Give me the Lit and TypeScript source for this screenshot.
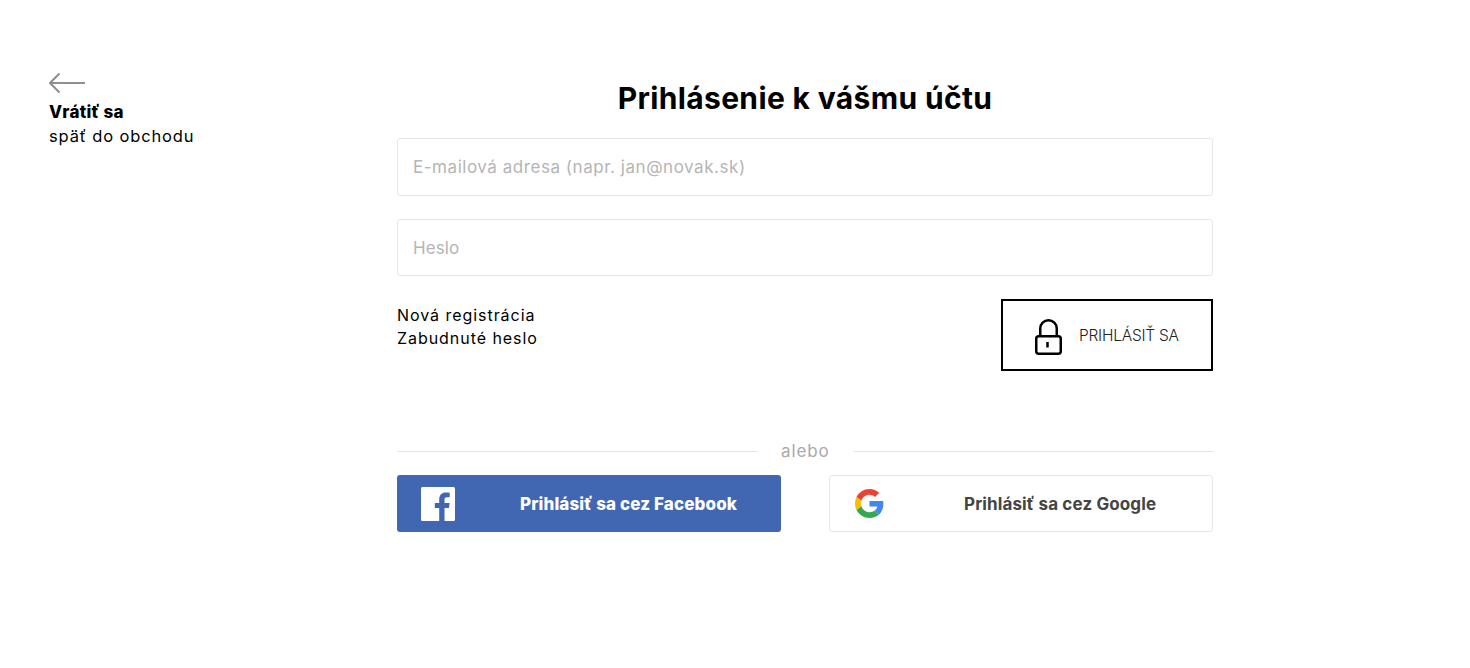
import {LitElement, html, css} from 'lit';
import {customElement} from 'lit/decorators.js';

@customElement('app-root')
export class AppRoot extends LitElement {
  static styles = css`
    :host {
      display: block;
      min-height: 668px;
      background: #fff;
      color: #000;
      font-family: Inter, "Liberation Sans", sans-serif;
    }
    .page {
      display: grid;
      grid-template-columns: 348px 816px;
      padding: 72px 0 0 49px;
    }
    .back { display: flex; flex-direction: column; align-items: flex-start; }
    .back svg { display: block; margin-bottom: 6px; }
    .back b { font-size: 17px; line-height: 24px; font-weight: 800; letter-spacing: 0.25px; }
    .back span { font-size: 16.5px; line-height: 24px; font-weight: 400; letter-spacing: 0.85px; }
    h1 {
      margin: 8px 0 22px;
      font-size: 30px;
      line-height: 36px;
      font-weight: 700;
      text-align: center;
      letter-spacing: 0.35px;
    }
    .field {
      box-sizing: border-box;
      height: 57.5px;
      border: 1px solid #e6e6e6;
      border-radius: 3px;
      padding: 0 15px;
      margin-bottom: 23px;
      display: flex;
      align-items: center;
      font-size: 17px;
      color: #b5b5b5;
      letter-spacing: 0.54px;
    }
    .field.pw { letter-spacing: 0.1px; padding-top: 1px; }
    .actions { display: flex; justify-content: space-between; align-items: flex-start; }
    .links { display: flex; flex-direction: column; padding-top: 5px; font-size: 16px; line-height: 23px; letter-spacing: 0.95px; }
    .login {
      box-sizing: border-box;
      width: 212px;
      height: 72px;
      border: 2px solid #000;
      display: flex;
      align-items: center;
      gap: 16px;
      padding-left: 30px;
      font-size: 15.5px;
      font-weight: 300;
      color: #222;
      letter-spacing: -0.23px;
    }
    .divider {
      display: flex;
      align-items: center;
      gap: 24px;
      margin-top: 69px;
      height: 22px;
      font-size: 17px;
      color: #aaa;
      letter-spacing: 0.9px;
    }
    .divider i { flex: 1; height: 1px; background: #e6e6e6; }
    .divider i:first-child { flex: 0 0 360px; }
    .social { display: grid; grid-template-columns: 1fr 1fr; gap: 48px; margin-top: 13px; }
    .btn {
      box-sizing: border-box;
      height: 57px;
      border-radius: 3px;
      display: flex;
      align-items: center;
      font-size: 17px;
      letter-spacing: 0.12px;
    }
    .fb { background: #4267b2; color: #fff; font-weight: 800; padding-left: 24px; gap: 65px; }
    .gg { border: 1px solid #e6e6e6; color: #444; font-weight: 700; padding-left: 25px; gap: 80px; }
  `;

  render() {
    return html`
      <div class="page">
        <div class="back">
          <svg width="37" height="22" viewBox="0 0 37 22" fill="none" stroke="#8f8f8f" stroke-width="2">
            <path d="M36 11H1M10.500 1.500L1 11l9.500 9.500"/>
          </svg>
          <b>Vrátiť sa</b>
          <span>späť do obchodu</span>
        </div>
        <div class="main">
          <h1>Prihlásenie k vášmu účtu</h1>
          <div class="field">E-mailová adresa (napr. jan@novak.sk)</div>
          <div class="field pw">Heslo</div>
          <div class="actions">
            <div class="links">
              <span>Nová registrácia</span>
              <span>Zabudnuté heslo</span>
            </div>
            <div class="login">
              <svg width="30" height="42" viewBox="0 0 30 42" fill="none" stroke="#000" stroke-width="2.500">
                <rect x="3.250" y="22.250" width="24.500" height="17.500" rx="2.500"/>
                <path d="M7.250 22v-7.500a8.250 8.250 0 0 1 16.500 0V22"/>
                <path d="M14.500 28v5.500"/>
              </svg>
              PRIHLÁSIŤ SA
            </div>
          </div>
          <div class="divider"><i></i>alebo<i></i></div>
          <div class="social">
            <div class="btn fb">
              <svg width="34" height="34" viewBox="0 0 34 34">
                <rect width="34" height="34" rx="1.500" fill="#fff"/>
                <path fill="#4267b2" d="M23.500 34V21h4.400l.7-5.100h-5.100v-3.200c0-1.500.4-2.500 2.500-2.500h2.700V5.700c-.5-.1-2.100-.2-3.900-.2-3.900 0-6.600 2.400-6.600 6.800v3.600h-4.400V21h4.400v13z"/>
              </svg>
              <span>Prihlásiť sa cez Facebook</span>
            </div>
            <div class="btn gg">
              <svg width="29" height="29" viewBox="0 0 48 48">
                <path fill="#ea4335" d="M24 9.500c3.500 0 6.700 1.200 9.200 3.600l6.900-6.900C35.900 2.400 30.500 0 24 0 14.600 0 6.500 5.400 2.600 13.200l8 6.200C12.500 13.700 17.800 9.500 24 9.500z"/>
                <path fill="#4285f4" d="M47 24.500c0-1.600-.1-3.100-.4-4.500H24v9h12.900c-.6 3-2.200 5.500-4.700 7.200l7.700 6c4.500-4.200 7.100-10.300 7.100-17.700z"/>
                <path fill="#fbbc05" d="M10.500 28.600c-.5-1.400-.8-3-.8-4.600s.3-3.200.8-4.600l-8-6.200C.9 16.500 0 20.100 0 24s.9 7.500 2.600 10.800z"/>
                <path fill="#34a853" d="M24 48c6.500 0 11.900-2.100 15.900-5.800l-7.700-6c-2.200 1.500-4.900 2.300-8.200 2.300-6.300 0-11.500-4.200-13.400-9.900l-8 6.200C6.500 42.600 14.600 48 24 48z"/>
              </svg>
              <span>Prihlásiť sa cez Google</span>
            </div>
          </div>
        </div>
      </div>
    `;
  }
}
